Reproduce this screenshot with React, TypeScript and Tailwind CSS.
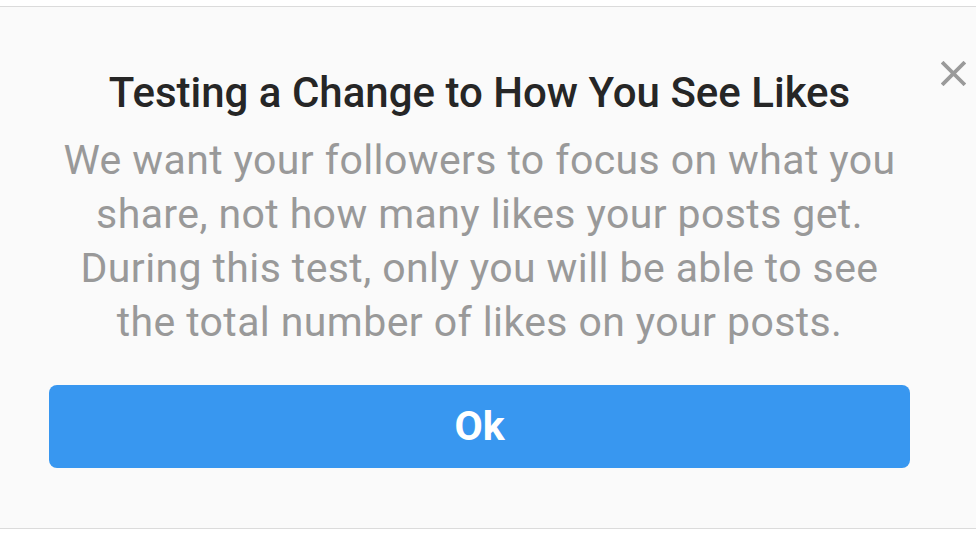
import React from "react";

export default function App() {
  return (
    <div className="w-[976px] h-[549px] bg-white pt-[6px]" style={{ fontFamily: "Roboto, 'Noto Sans', sans-serif" }}>
      <div className="relative h-[523px] bg-[#fafafa] border-y border-[#dbdbdb] flex flex-col items-stretch pl-[49px] pr-[66px] pt-[60px]">
        <button className="absolute left-[941px] top-[54px] w-[25px] h-[25px] flex items-center justify-center">
          <svg width="25" height="25" viewBox="0 0 25 25">
            <path d="M2.5 2.5 L22.5 22.5 M22.5 2.5 L2.5 22.5" stroke="#9a9a9a" strokeWidth="3.8" strokeLinecap="square" />
          </svg>
        </button>
        <h1 className="text-[42px] leading-[52px] font-medium text-[#262626] text-center whitespace-nowrap">
          Testing a Change to How You See Likes
        </h1>
        <p className="text-[41px] leading-[54px] tracking-[0.4px] text-[#999999] text-center whitespace-nowrap mt-[14px]">
          We want your followers to focus on what you
          <br />
          share, not how many likes your posts get.
          <br />
          During this test, only you will be able to see
          <br />
          the total number of likes on your posts.
        </p>
        <button className="mt-[36px] w-[861px] h-[83px] rounded-[8px] bg-[#3897f0] text-white text-[41px] font-bold flex items-center justify-center">
          Ok
        </button>
      </div>
    </div>
  );
}
